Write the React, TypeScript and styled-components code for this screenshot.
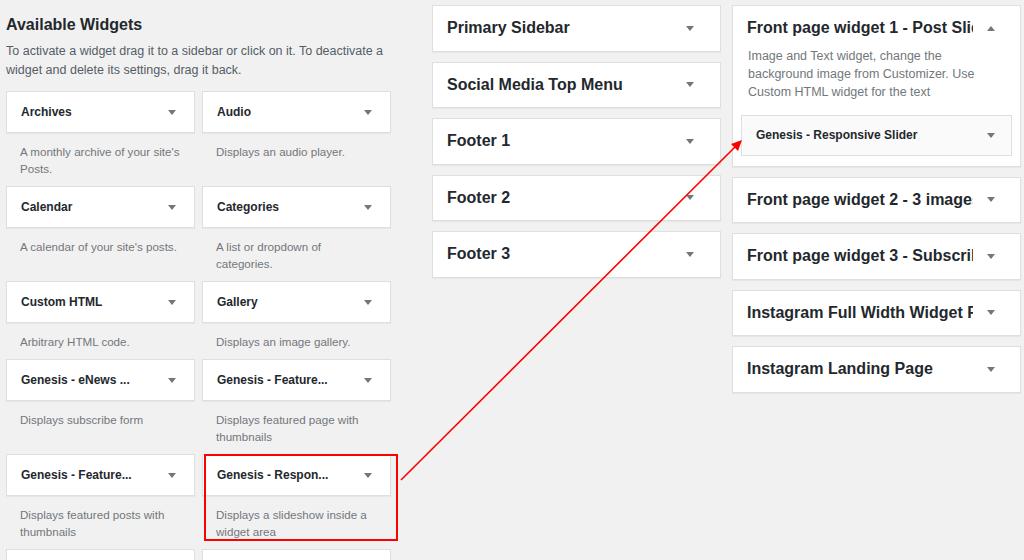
import styled, { createGlobalStyle } from 'styled-components';

const GlobalStyle = createGlobalStyle`
    html, body {
        margin: 0;
        padding: 0;
        background: #f1f1f1;
    }
    body {
        font-family: "Liberation Sans", Arial, sans-serif;
        color: #23282d;
    }
`;

const available = [
    { title: 'Archives', desc: "A monthly archive of your site's Posts." },
    { title: 'Audio', desc: 'Displays an audio player.' },
    { title: 'Calendar', desc: "A calendar of your site's posts." },
    { title: 'Categories', desc: 'A list or dropdown of categories.' },
    { title: 'Custom HTML', desc: 'Arbitrary HTML code.' },
    { title: 'Gallery', desc: 'Displays an image gallery.' },
    { title: 'Genesis - eNews ...', desc: 'Displays subscribe form' },
    { title: 'Genesis - Feature...', desc: 'Displays featured page with thumbnails' },
    { title: 'Genesis - Feature...', desc: 'Displays featured posts with thumbnails' },
    { title: 'Genesis - Respon...', desc: 'Displays a slideshow inside a widget area' },
    { title: 'Genesis - User Pr...', desc: 'Displays user profile block' },
    { title: 'Image', desc: 'Displays an image.' },
];

const middleSidebars = ['Primary Sidebar', 'Social Media Top Menu', 'Footer 1', 'Footer 2', 'Footer 3'];

const rightSidebars = [
    'Front page widget 2 - 3 images',
    'Front page widget 3 - Subscribe',
    'Instagram Full Width Widget Footer',
    'Instagram Landing Page',
];

export default function App(): JSX.Element {
    return (
        <Page>
            <GlobalStyle />
            <LeftColumn>
                <Heading>Available Widgets</Heading>
                <Intro>
                    To activate a widget drag it to a sidebar or click on it. To deactivate a widget and delete its
                    settings, drag it back.
                </Intro>
                <WidgetGrid>
                    {available.map((w, i) => (
                        <WidgetCell key={i}>
                            <WidgetBox>
                                <WidgetTitle>{w.title}</WidgetTitle>
                                <Toggle $right={4}>
                                    <Caret />
                                </Toggle>
                            </WidgetBox>
                            <WidgetDesc>{w.desc}</WidgetDesc>
                        </WidgetCell>
                    ))}
                </WidgetGrid>
            </LeftColumn>

            <SidebarColumn>
                {middleSidebars.map((name) => (
                    <SidebarBox key={name}>
                        <SidebarHeader>
                            <SidebarName>{name}</SidebarName>
                            <Toggle $right={12}>
                                <Caret />
                            </Toggle>
                        </SidebarHeader>
                    </SidebarBox>
                ))}
            </SidebarColumn>

            <SidebarColumn>
                <SidebarBox>
                    <SidebarHeader>
                        <SidebarName $clip>Front page widget 1 - Post Slider</SidebarName>
                        <Toggle $right={11}>
                            <Caret $up />
                        </Toggle>
                    </SidebarHeader>
                    <SidebarDesc>
                        Image and Text widget, change the background image from Customizer. Use Custom HTML widget for
                        the text
                    </SidebarDesc>
                    <DroppedWidget>
                        <DroppedTitle>Genesis - Responsive Slider</DroppedTitle>
                        <Toggle $right={2}>
                            <Caret />
                        </Toggle>
                    </DroppedWidget>
                </SidebarBox>
                {rightSidebars.map((name) => (
                    <SidebarBox key={name}>
                        <SidebarHeader>
                            <SidebarName $clip>{name}</SidebarName>
                            <Toggle $right={11}>
                                <Caret />
                            </Toggle>
                        </SidebarHeader>
                    </SidebarBox>
                ))}
            </SidebarColumn>

            {/* annotation drawn over the screenshot */}
            <Annotation viewBox="0 0 1024 560" width="1024" height="560">
                <rect x="205" y="455" width="192" height="85" fill="none" stroke="#f00" strokeWidth="2" />
                <line x1="401" y1="480" x2="735" y2="147" stroke="#f00" strokeWidth="1.6" />
                <polygon points="742,140 731,144 738,151" fill="#f00" />
            </Annotation>
        </Page>
    );
}

const Page = styled.div`
    position: relative;
    height: 560px;
    overflow: hidden;
    display: flex;
    align-items: flex-start;
    padding-left: 6px;
    box-sizing: border-box;
`;

const LeftColumn = styled.section`
    flex: none;
    width: 385px;
    margin-right: 41px;
    display: flex;
    flex-direction: column;
    padding-top: 15px;
`;

const Heading = styled.h2`
    margin: 0;
    font-size: 16px;
    line-height: 20px;
    font-weight: 700;
    color: #23282d;
`;

const Intro = styled.p`
    margin: 7px 0 0;
    font-size: 12.5px;
    line-height: 19px;
    color: #555d66;
`;

const WidgetGrid = styled.div`
    display: grid;
    grid-template-columns: 189px 189px;
    column-gap: 7px;
    margin-top: 11px;
    align-items: start;
`;

const WidgetCell = styled.div`
    display: flex;
    flex-direction: column;
`;

const WidgetBox = styled.div`
    display: flex;
    align-items: center;
    height: 42px;
    box-sizing: border-box;
    background: #fff;
    border: 1px solid #dfdfdf;
    box-shadow: 0 1px 1px rgba(0, 0, 0, 0.04);
    padding-left: 14px;
`;

const WidgetTitle = styled.span`
    flex: 1;
    font-size: 12px;
    font-weight: 700;
    color: #23282d;
    white-space: nowrap;
    overflow: hidden;
`;

const WidgetDesc = styled.p`
    margin: 0;
    padding: 10px 13px 9px 14px;
    font-size: 11.6px;
    line-height: 17px;
    color: #72777c;
`;

const Toggle = styled.span<{ $right: number }>`
    flex: none;
    width: 36px;
    margin-right: ${(p) => p.$right}px;
    display: flex;
    justify-content: center;
    align-items: center;
`;

const Caret = styled.span<{ $up?: boolean }>`
    width: 0;
    height: 0;
    border-left: 4px solid transparent;
    border-right: 4px solid transparent;
    ${(p) => (p.$up ? 'border-bottom: 5px solid #72777c;' : 'border-top: 5px solid #72777c;')}
`;

const SidebarColumn = styled.section`
    flex: none;
    width: 289px;
    margin-right: 11px;
    display: flex;
    flex-direction: column;
    gap: 10px;
    padding-top: 5px;
`;

const SidebarBox = styled.div`
    background: #fff;
    border: 1px solid #dfdfdf;
    box-shadow: 0 1px 1px rgba(0, 0, 0, 0.04);
    box-sizing: border-box;
    display: flex;
    flex-direction: column;
`;

const SidebarHeader = styled.div`
    display: flex;
    align-items: center;
    height: 44.5px;
    padding-left: 14px;
`;

const SidebarName = styled.h3<{ $clip?: boolean }>`
    flex: 1;
    margin: 0;
    font-size: 16px;
    font-weight: 700;
    color: #23282d;
    white-space: nowrap;
    overflow: hidden;
    ${(p) => (p.$clip ? 'max-width: 228px;' : '')}
`;

const SidebarDesc = styled.p`
    margin: -4px 0 0;
    padding: 0 15px;
    font-size: 12.5px;
    line-height: 18px;
    color: #72777c;
`;

const DroppedWidget = styled.div`
    display: flex;
    align-items: center;
    height: 41px;
    box-sizing: border-box;
    margin: 14px 8px 10px 8px;
    background: #fafafa;
    border: 1px solid #dfdfdf;
    padding-left: 14px;
`;

const DroppedTitle = styled.span`
    flex: 1;
    font-size: 12px;
    font-weight: 700;
    color: #23282d;
    white-space: nowrap;
    overflow: hidden;
`;

const Annotation = styled.svg`
    position: absolute;
    left: 0;
    top: 0;
    pointer-events: none;
`;
